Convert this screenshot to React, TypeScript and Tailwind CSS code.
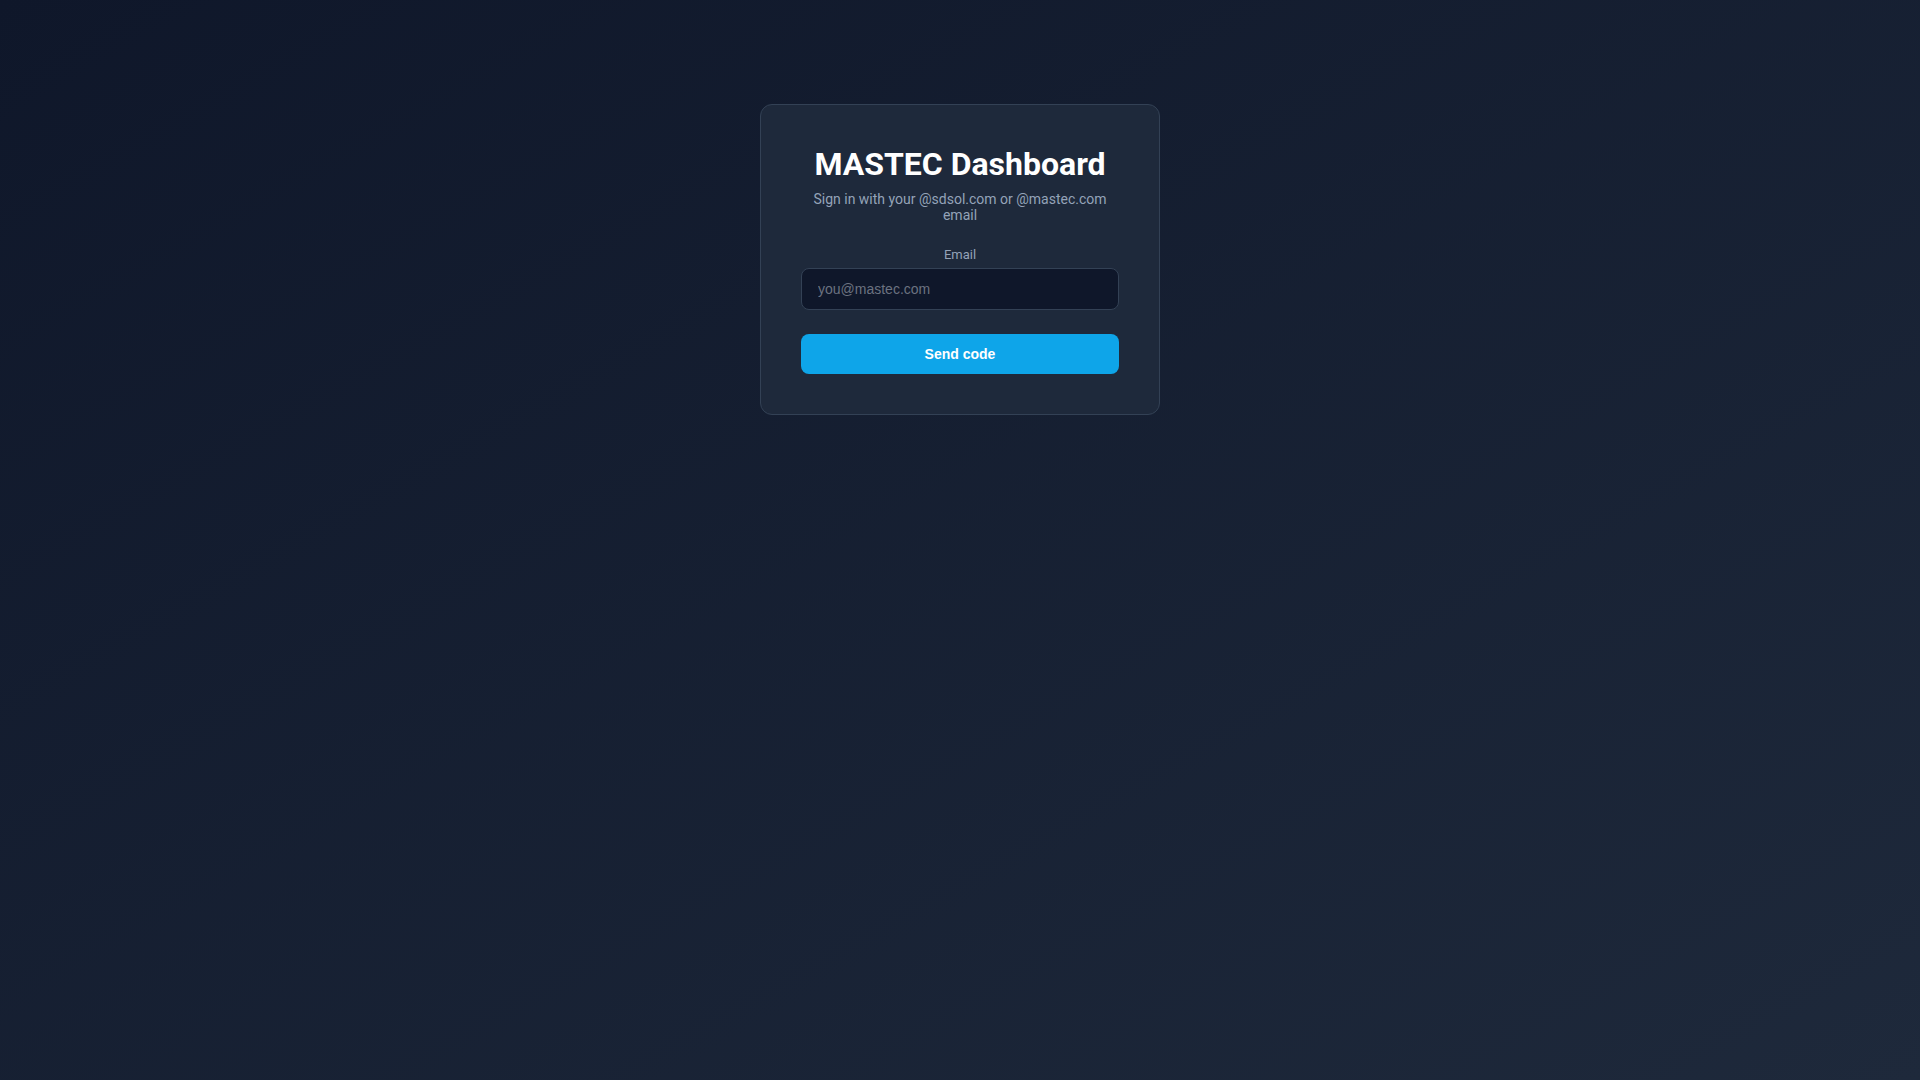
import { useState } from 'react';

export default function App() {
  const [email, setEmail] = useState('');

  return (
    <div className="min-h-screen w-full bg-gradient-to-br from-[#0f172a] to-[#1e293b] font-['Roboto',sans-serif] flex justify-center pt-[104px]">
      <div className="w-[400px] h-fit rounded-xl border border-[#334155] bg-[#1e293b] p-10 text-center">
        <h1 className="text-[32px] leading-[normal] font-bold text-white">MASTEC Dashboard</h1>
        <p className="mt-2 text-sm leading-4 text-[#94a3b8]">
          Sign in with your @sdsol.com or @mastec.com email
        </p>

        <form
          className="mt-6"
          onSubmit={(e) => {
            e.preventDefault();
          }}
        >
          <label htmlFor="email" className="block text-[13px] leading-4 text-[#94a3b8] mb-[5px]">
            Email
          </label>
          <input
            id="email"
            type="email"
            value={email}
            onChange={(e) => setEmail(e.target.value)}
            placeholder="you@mastec.com"
            className="block w-full rounded-lg border border-[#334155] bg-[#0f172a] px-4 py-2.5 text-sm leading-5 text-left text-white placeholder:text-[#6b7280] font-['Liberation_Sans',Arial,sans-serif] outline-none focus:border-[#0ea5e9]"
          />
          <button
            type="submit"
            className="mt-6 block w-full rounded-lg bg-[#0ea5e9] py-2.5 text-sm leading-5 font-bold text-white font-['Liberation_Sans',Arial,sans-serif] hover:bg-[#0284c7]"
          >
            Send code
          </button>
        </form>
      </div>
    </div>
  );
}
